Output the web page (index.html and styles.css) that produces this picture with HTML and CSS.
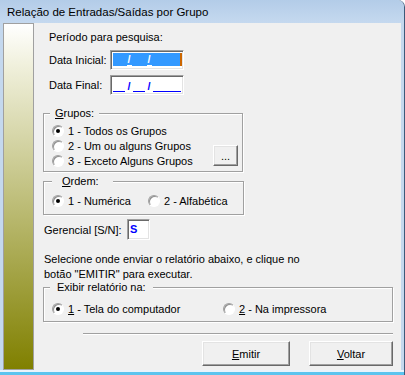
FILE: index.html
```
<!DOCTYPE html>
<html lang="pt">
<head>
    <meta charset="UTF-8">
    <title>Relação de Entradas/Saídas por Grupo</title>
    <link rel="stylesheet" href="styles.css">
</head>
<body>
    <div class="window">
        <div class="titlebar">Relação de Entradas/Saídas por Grupo</div>

        <div class="client">
            <div class="sidebar"></div>

            <div class="content">
                <div class="period">Período para pesquisa:</div>

                <div class="date-row">
                    <span class="field-label">Data Inicial:</span>
                    <div class="edit date-edit selected">
                        <span class="sel">
                            <span class="blank"></span><span class="slash">/</span><span class="blank"></span><span class="slash">/</span><span class="blank last"></span>
                        </span>
                    </div>
                </div>

                <div class="date-row">
                    <span class="field-label">Data Final:</span>
                    <div class="edit date-edit">
                        <span class="blank"></span><span class="slash">/</span><span class="blank"></span><span class="slash">/</span><span class="blank last"></span>
                    </div>
                </div>

                <!-- Grupos -->
                <div class="group grupos">
                    <span class="group-title"><u>G</u>rupos:</span>
                    <div class="group-body">
                        <div class="options">
                            <div class="option"><span class="radio checked"></span>1 - Todos os Grupos</div>
                            <div class="option"><span class="radio"></span>2 - Um ou alguns Grupos</div>
                            <div class="option"><span class="radio"></span>3 - Exceto Alguns Grupos</div>
                        </div>
                        <button class="btn dots">...</button>
                    </div>
                </div>

                <!-- Ordem -->
                <div class="group ordem">
                    <span class="group-title ordem-title"><u>O</u>rdem:</span>
                    <div class="group-body row">
                        <div class="option first"><span class="radio checked"></span>1 - Numérica</div>
                        <div class="option"><span class="radio"></span>2 - Alfabética</div>
                    </div>
                </div>

                <div class="gerencial-row">
                    <span class="field-label">Gerencial [S/N]:</span>
                    <div class="edit small-edit">S</div>
                </div>

                <p class="hint">Selecione onde enviar o relatório abaixo, e clique no<br>botão "EMITIR" para executar.</p>

                <!-- Exibir -->
                <div class="group exibir">
                    <span class="group-title">Exibir relatório na:</span>
                    <div class="group-body row">
                        <div class="option first"><span class="radio checked"></span><u>1</u>&nbsp;- Tela do computador</div>
                        <div class="option"><span class="radio"></span><u>2</u>&nbsp;- Na impressora</div>
                    </div>
                </div>

                <div class="separator"></div>

                <div class="actions">
                    <button class="btn emitir"><u>E</u>mitir</button>
                    <button class="btn voltar"><u>V</u>oltar</button>
                </div>
            </div>
        </div>
    </div>
</body>
</html>
```

FILE: styles.css
```
* {
    box-sizing: border-box;
    margin: 0;
    padding: 0;
}

body {
    width: 405px;
    height: 375px;
    overflow: hidden;
    font-family: "Liberation Sans", Arial, sans-serif;
    font-size: 11px;
    color: #000;
}

.window {
    width: 405px;
    height: 375px;
    display: flex;
    flex-direction: column;
    border-right: 1px solid #3d5a7a;
    border-top-right-radius: 7px;
    background: linear-gradient(to bottom, #c4d8ee 0, #c4d8ee 370px, #eaf3fb 370px, #eaf3fb 372px, #5bc4ef 372px);
}

.titlebar {
    height: 23px;
    padding: 2px 0 0 7px;
    line-height: 21px;
    font-size: 11.5px;
    background: linear-gradient(#b3cce8, #c5d9ef);
    border-top-right-radius: 7px;
}

.client {
    flex: 1;
    display: flex;
    margin: 0 3px 5px 3px;
    background: #f0f0f0;
}

.sidebar {
    width: 31px;
    border: 1px solid #a0a0a0;
    background: linear-gradient(#ffffff, #f0f0dc 12%, #808000);
}

.content {
    flex: 1;
    display: flex;
    flex-direction: column;
    padding: 7px 8px 0 9px;
}

.period {
    margin-left: 6px;
    line-height: 14px;
}

/* date fields */
.date-row {
    display: flex;
    align-items: center;
    margin: 6px 0 0 6px;
}

.date-row + .date-row {
    margin-top: 5px;
}

.date-row .field-label {
    width: 61px;
}

.edit {
    display: flex;
    height: 20px;
    background: #fff;
    border: 1px solid;
    border-color: #a0a0a0 #fff #fff #a0a0a0;
    box-shadow: inset 1px 1px 0 #696969, inset -1px -1px 0 #e3e3e3;
}

.date-edit {
    width: 74px;
    padding: 1px 2px;
    align-items: flex-end;
    color: #0000ff;
}

.blank {
    width: 12px;
    margin-bottom: 1px;
    border-bottom: 1px solid #0000ff;
}

.blank.last {
    flex: 1;
}

.slash {
    width: 5px;
    margin: 0 1.5px 1px;
    line-height: 12px;
    text-align: center;
    font-weight: bold;
}

.date-edit.selected {
    padding: 2px 1px 3px 2px;
    align-items: stretch;
}

.sel {
    flex: 1;
    display: flex;
    align-items: flex-end;
    background: #3399ff;
    border-right: 2px solid #cc6600;
}

.sel .blank {
    margin-bottom: 0;
    border-bottom-color: #3399ff;
}

.sel .slash {
    margin-bottom: 0;
    color: #fff;
    border-bottom: 1px solid #fff;
}

/* group boxes */
.group {
    display: flex;
    flex-direction: column;
    border: 1px solid #a0a0a0;
    box-shadow: inset 1px 1px 0 #fff, 1px 1px 0 #fff;
}

.group-title {
    align-self: flex-start;
    margin: -8px 0 0 6px;
    padding: 0 5px;
    line-height: 14px;
    background: #f0f0f0;
}

.ordem-title {
    margin-left: 8px;
    padding: 0 14px 0 10px;
}

.exibir .group-title {
    padding: 0 7px;
}

.group-body {
    display: flex;
    justify-content: space-between;
}

.option {
    display: flex;
    align-items: center;
    height: 15px;
    white-space: nowrap;
}

.radio {
    width: 12px;
    height: 12px;
    flex: none;
    display: flex;
    align-items: center;
    justify-content: center;
    margin-right: 4px;
    border-radius: 50%;
    background: #fff;
    border: 1px solid;
    border-color: #a0a0a0 #fff #fff #a0a0a0;
    box-shadow: inset 1px 1px 0 #909090;
}

.radio.checked::after {
    content: "";
    width: 4px;
    height: 4px;
    border-radius: 50%;
    background: #000;
}

.grupos {
    width: 200px;
    margin-top: 18px;
}

.grupos .group-body {
    padding: 3px 4px 3px 8px;
}

.ordem {
    width: 201px;
    margin-top: 9px;
}

.group-body.row {
    justify-content: flex-start;
}

.ordem .group-body {
    padding: 5px 0 6px 8px;
}

.ordem .option.first {
    width: 96px;
}

.exibir {
    width: 350px;
    margin-top: 5px;
}

.exibir .group-body {
    padding: 7px 0 5px 8px;
}

.exibir .option.first {
    width: 171px;
}

/* gerencial */
.gerencial-row {
    display: flex;
    align-items: center;
    margin: 4px 0 0 1px;
}

.gerencial-row .field-label {
    width: 83px;
}

.small-edit {
    width: 23px;
    height: 21px;
    padding: 1px 2px;
    line-height: 17px;
    font-weight: bold;
    color: #0000ff;
}

.hint {
    margin: 12px 0 0 1px;
    line-height: 15px;
}

.separator {
    width: 310px;
    height: 2px;
    margin: 11px 0 0 40px;
    border-top: 1px solid #a0a0a0;
    border-bottom: 1px solid #fff;
}

/* buttons */
.btn {
    height: 25px;
    font: inherit;
    color: #000;
    background: #f0f0f0;
    border: 1px solid;
    border-color: #fff #696969 #696969 #fff;
    box-shadow: inset -1px -1px 0 #a0a0a0, inset 1px 1px 0 #e3e3e3;
}

.dots {
    width: 25px;
    height: 21px;
    align-self: flex-end;
    margin-bottom: 2px;
    line-height: 10px;
}

.actions {
    display: flex;
    justify-content: flex-end;
    gap: 19px;
    margin-top: 6px;
}

.emitir {
    width: 88px;
}

.voltar {
    width: 84px;
}
```
